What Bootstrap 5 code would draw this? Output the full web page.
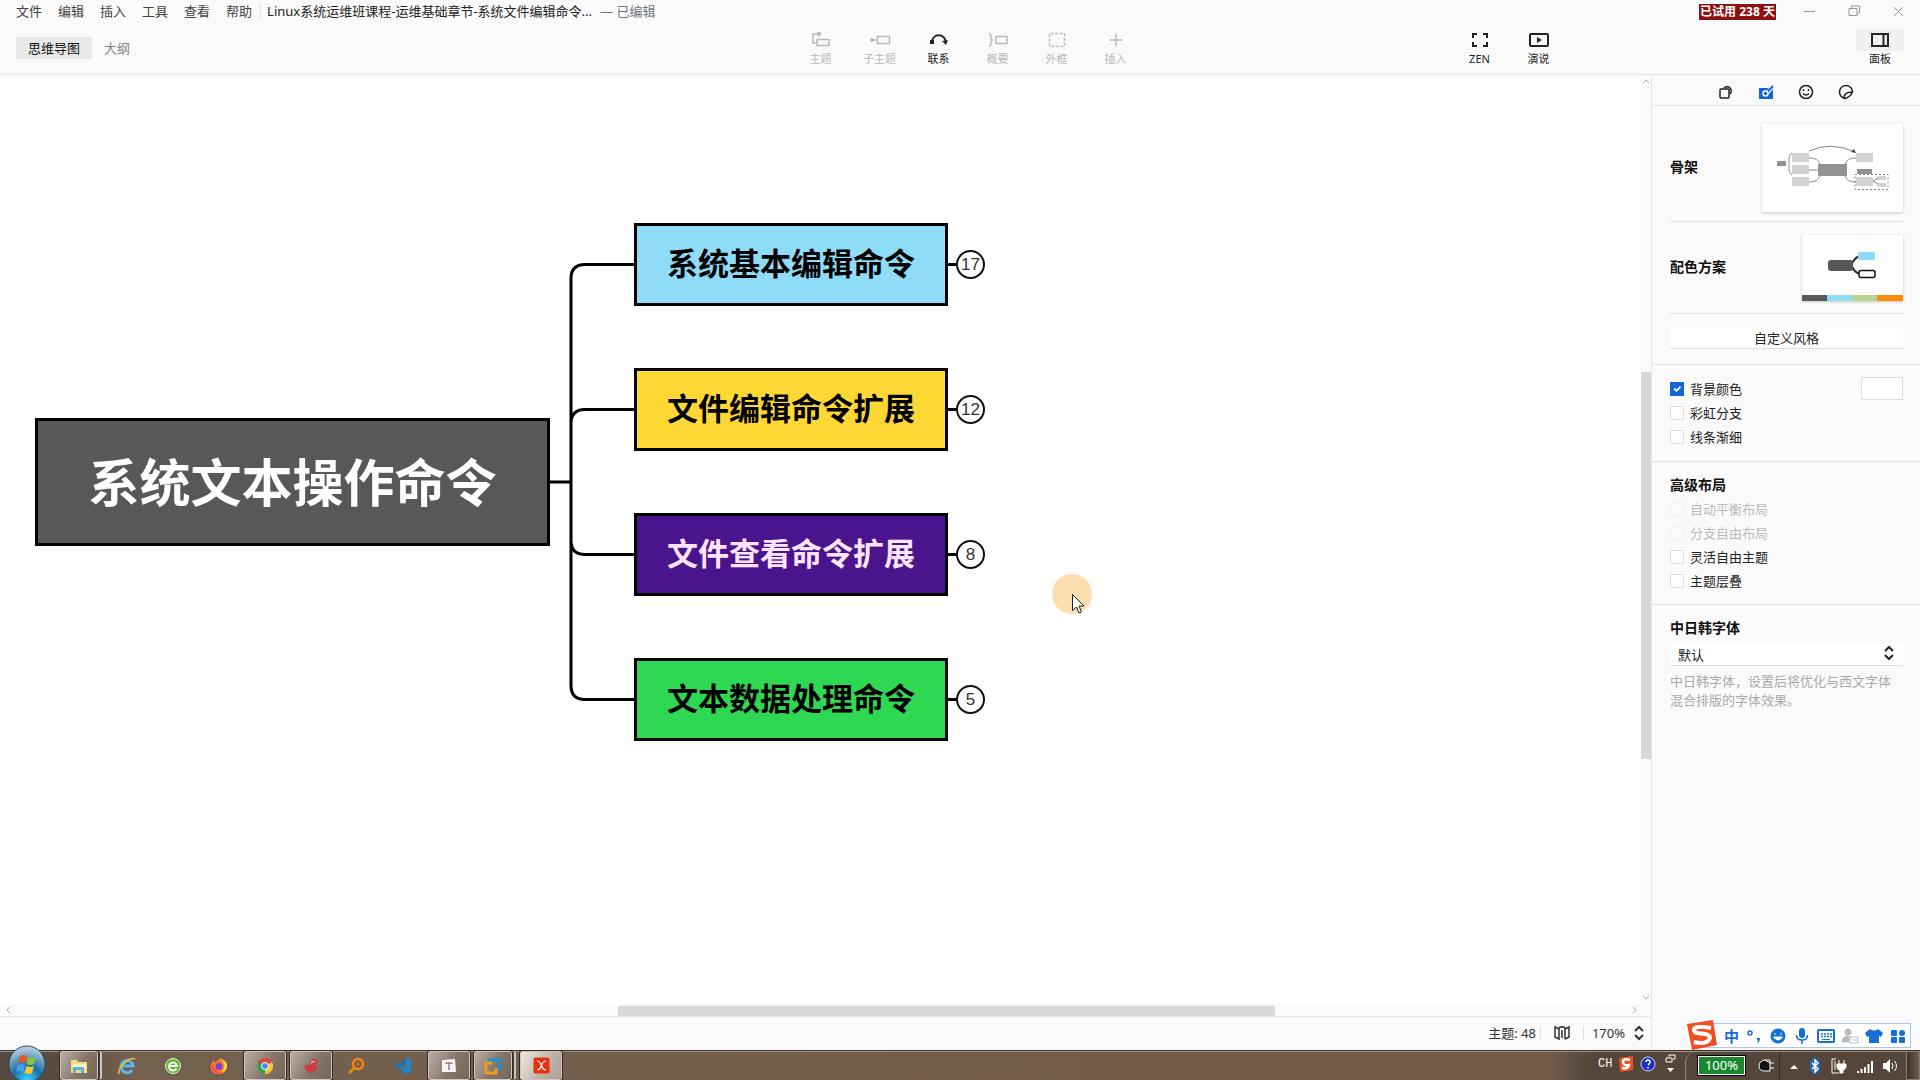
<!DOCTYPE html>
<html lang="zh-CN">
<head>
<meta charset="utf-8">
<meta name="viewport" content="width=device-width, initial-scale=1">
<title>Linux系统运维班课程</title>
<link href="https://cdn.jsdelivr.net/npm/bootstrap@5.3.0/dist/css/bootstrap.min.css" rel="stylesheet">
<style>
  :root { --ui: #fafafa; --line: #e6e6e6; --ink: #222; --blue: #1565d8; }
  body { font: 13px/18px "Noto Sans", "Noto Sans CJK SC", sans-serif; color: var(--ink); background: var(--ui); }
  button { font: inherit; color: inherit; border: 0; background: none; padding: 0; }
  svg { display: block; flex: none; }
  svg:not([fill]) { fill: none; }
  svg:not([stroke]) { stroke: currentColor; }
  a { color: inherit; text-decoration: none; }

  .app-head { height: 75px; border-bottom: 1px solid var(--line); }
  .title-row { height: 22px; padding: 0 14px 0 16px; }
  .menu-links { gap: 16px; color: #444; }
  .doc-title { border-left: 1px solid #e4e4e4; padding-left: 6px; margin-left: 8px; height: 16px; line-height: 16px; }
  .trial { background: #8f1010; color: #fff; font-weight: 700; font-size: 12px; line-height: 16px; width: 77px; margin: 2px 26px 0 0; }
  .win-btns { color: #999; gap: 28px; }
  .tool-row { padding: 1px 16px 0; height: 50px; }
  .tool-side { flex: 1 1 0; }
  .tab-strip { padding-top: 14px; }
  .view-tab { padding: 2px 12px; line-height: 18px; color: #888; }
  .view-tab.on { background: #e9e9e9; color: #111; }
  .tools { padding-left: 16px; }
  .tool { width: 59px; font-size: 11px; line-height: 14px; padding-bottom: 1px; color: #bbb; }
  .tool.live { color: var(--ink); }
  .tool-icon { width: 48px; height: 22px; margin-bottom: 1px; }
  .show-group { margin-right: 288px; }
  .tool.panel-btn { width: 48px; }
  .panel-btn .tool-icon { background: #efefef; }

  .board { background: #fff; border-top: 4px solid var(--ui); padding: 144px 0 0 35px; overflow: hidden; }
  .root-node { width: 515px; height: 128px; border: 3px solid #000; background: #585858; color: #fff; font-size: 51px; line-height: 60px; }
  .branches { gap: 62px; }
  .branch { width: 314px; height: 83px; border: 3px solid #000; color: #000; font-size: 31px; line-height: 40px; }
  .node-text { font-family: "Noto Sans CJK SC", sans-serif; font-weight: 700; padding-bottom: 5px; }
  .stub { width: 8px; height: 3px; background: #000; }
  .fold { width: 29px; height: 29px; border: 2px solid #111; border-radius: 50%; background: #fff; color: #333; font: 17px/25px "Liberation Sans", sans-serif; text-align: center; }
  .c-sky { background: #8edcf7; } .c-sun { background: #fdd835; }
  .c-violet { background: #4a148c; color: #fce4ff; } .c-green { background: #2fd853; }
  .pointer { left: 1052px; top: 574px; }

  .v-bar { width: 10px; color: #aaa; padding: 3px 0; background: var(--ui); }
  .v-thumb { width: 10px; height: 387px; background: #d8d8d8; margin-top: 52px; }
  .h-bar { height: 13px; color: #aaa; border-bottom: 1px solid var(--line); padding: 0 5px; }
  .h-thumb { height: 10px; width: 40%; background: #d8d8d8; margin-left: 37%; }
  .status { height: 33px; padding: 0 6px 2px 0; color: #333; }
  .status .sep { width: 1px; height: 12px; background: #ddd; }

  .side { width: 269px; border-left: 1px solid var(--line); }
  .side-tabs { height: 31px; gap: 20px; border-bottom: 1px solid var(--line); padding-top: 4px; }
  .blk { padding: 0 17px 0 18px; }
  .full { border-bottom: 1px solid #dedede; }
  .rule { border-bottom: 1px solid #dedede; }
  .h-lab { font-size: 14px; line-height: 20px; font-weight: 700; color: #111; margin-bottom: 2px; }
  .thumb { background: #fff; box-shadow: 0 1px 3px #0003; }
  .wide-btn { height: 21px; background: #fff; border-bottom: 1px solid #ddd; line-height: 20px; margin: 14px 0 15px; }
  .opt { height: 24px; gap: 6px; }
  .opt .form-check-input { width: 14px; height: 14px; margin: 0; border-radius: 0; border-color: #ddd; flex: none; }
  .opt .form-check-input:checked { background-color: var(--blue); border-color: var(--blue); }
  .opt .form-check-input:disabled, .opt .form-check-input:disabled ~ label { opacity: 1; color: #bbb; }
  .opt .form-check-input:disabled { border-color: #f2f2f2; background: none; }
  .swatch { width: 42px; height: 23px; padding: 0; border: 1px solid #ddd; background: #fff; }
  .cjk-select { display: block; appearance: none; width: 100%; height: 22px; border: 0; border-bottom: 1px solid #ddd; background: #fff; padding: 0 8px; font: inherit; color: inherit; }
  .hint { color: #aaa; line-height: 19px; margin: 6px 0 0; }

  .taskbar { height: 30px; background: linear-gradient(90deg, #564940 0, #5a4b41 60px, #74604f 130px, #705b4a 78%, #705b4a 1550px, #54463b 1590px); border-top: 1px solid #3a302a; box-shadow: inset 0 1px #a3968b; gap: 4px; }
  .orb { width: 56px; height: 30px; }
  .orb svg { position: absolute; left: 8px; top: -6px; }
  .slot { width: 42px; height: 29px; }
  .slot.open { border: 1px solid #cfc5bc; border-radius: 2px; outline: 1px solid #322a24; background: linear-gradient(120deg, #b9afa6, #85766a 55%, #75665a); }
  .slot.now { background: linear-gradient(120deg, #eee9e4, #bdb3aa 60%, #aaa096); }
  .slot.narrow { width: 38px; margin-right: 4px; box-shadow: 3px 0 0 -1px #4a3e35, 5px 0 0 -1px #cfc5bc; }
  .tray { color: #fff; height: 29px; }
  .lang { font: 12px/16px "Liberation Mono", monospace; width: 19px; }
  .batt-zone { height: 28px; padding: 0 4px 0 12px; gap: 12px; border-left: 1px solid #8d8074; border-top-left-radius: 10px; border-right: 1px solid #33291f; }
  .batt { width: 47px; height: 19px; background: #18882e; border: 1px solid #fff; outline: 1px solid #000; line-height: 17px; font-size: 13px; text-align: center; }
  .peek { width: 14px; height: 29px; border: 1px solid #8d8074; background: linear-gradient(90deg, #3a302a, #6b5d52); }

  .ime { right: 9px; bottom: 32px; width: 217px; height: 25px; background: #fff; border: 1px solid #a9c8ea; color: #1470d6; padding-left: 26px; }
  .ime > span, .ime > svg { width: 24px; text-align: center; font-size: 15px; }
  .ime > .ime-logo { left: -9px; top: -5px; width: 32px; }
</style>
<script src="https://cdn.jsdelivr.net/npm/bootstrap@5.3.0/dist/js/bootstrap.bundle.min.js"></script>
</head>
<body class="vh-100 d-flex flex-column overflow-hidden position-relative">

<header class="app-head flex-shrink-0">
  <div class="title-row d-flex align-items-center">
    <nav class="menu-links d-flex">
      <a href="#">文件</a><a href="#">编辑</a><a href="#">插入</a><a href="#">工具</a><a href="#">查看</a><a href="#">帮助</a>
    </nav>
    <div class="doc-title">Linux系统运维班课程-运维基础章节-系统文件编辑命令...</div>
    <span class="text-secondary ms-2">— 已编辑</span>
    <button class="trial ms-auto">已试用 238 天</button>
    <div class="win-btns d-flex align-items-center">
      <button aria-label="最小化"><svg width="16" height="14"><path d="M2 7.500h11"/></svg></button>
      <button aria-label="还原"><svg width="16" height="14"><path d="M3 4.500h8v7h-8zM5.500 4v-2h8v7h-2"/></svg></button>
      <button aria-label="关闭"><svg width="16" height="14"><path d="M4 3l9 9M13 3l-9 9"/></svg></button>
    </div>
  </div>
  <div class="tool-row d-flex">
    <div class="tool-side tab-strip d-flex align-items-start">
      <button class="view-tab on">思维导图</button><button class="view-tab">大纲</button>
    </div>
    <div class="tools d-flex">
      <button class="tool"><span class="tool-icon d-flex align-items-center justify-content-center mx-auto"><svg width="20" height="18" stroke-width="1.500"><path d="M7 3H2v9h4M6 8.500h12v6H6z"/><circle cx="8" cy="3" r="1.500" fill="currentColor"/></svg></span>主题</button>
      <button class="tool"><span class="tool-icon d-flex align-items-center justify-content-center mx-auto"><svg width="22" height="16" stroke-width="1.500"><path d="M3 8h5M8.500 4.500h12v7h-12z"/><circle cx="3" cy="8" r="2" fill="currentColor" stroke="none"/></svg></span>子主题</button>
      <button class="tool live"><span class="tool-icon d-flex align-items-center justify-content-center mx-auto"><svg width="20" height="16" stroke-width="2"><path d="M3 10C4 1 15 1 17 10"/><path d="M1 8h4v4H1zM13 9l6-1-2 5z" fill="currentColor" stroke="none"/></svg></span>联系</button>
      <button class="tool"><span class="tool-icon d-flex align-items-center justify-content-center mx-auto"><svg width="20" height="16" stroke-width="1.500"><path d="M1 2q2 0 2 3v1q0 2 2 2q-2 0-2 2v1q0 3-2 3M8 4.500h11v7H8z"/></svg></span>概要</button>
      <button class="tool"><span class="tool-icon d-flex align-items-center justify-content-center mx-auto"><svg width="18" height="16" stroke-width="1.500"><rect x="1.500" y="1.500" width="15" height="13" rx="1" stroke-dasharray="3 1.500"/></svg></span>外框</button>
      <button class="tool"><span class="tool-icon d-flex align-items-center justify-content-center mx-auto"><svg width="16" height="16" stroke-width="1.500"><path d="M8 1.500v13M1.500 8h13"/></svg></span>插入</button>
    </div>
    <div class="tool-side d-flex justify-content-end">
      <div class="show-group d-flex">
        <button class="tool live"><span class="tool-icon d-flex align-items-center justify-content-center mx-auto"><svg width="18" height="16" stroke-width="2"><path d="M2 6V2h4M12 2h4v4M16 10v4h-4M6 14H2v-4"/></svg></span>ZEN</button>
        <button class="tool live"><span class="tool-icon d-flex align-items-center justify-content-center mx-auto"><svg width="22" height="16" stroke-width="2"><rect x="2" y="2" width="18" height="12" rx="1"/><path d="M9 5l5 3-5 3z" fill="currentColor" stroke="none"/></svg></span>演说</button>
      </div>
      <button class="tool live panel-btn"><span class="tool-icon d-flex align-items-center justify-content-center mx-auto"><svg width="20" height="16" stroke-width="2"><rect x="2" y="2" width="16" height="12"/><path d="M13.500 2v12"/></svg></span>面板</button>
    </div>
  </div>
</header>

<div class="d-flex flex-fill" style="min-height:0">
  <main class="d-flex flex-column flex-fill" style="min-width:0">
    <div class="d-flex flex-fill" style="min-height:0">
      <div class="board flex-fill">
        <div class="d-flex align-items-center">
          <div class="root-node node-text d-flex align-items-center justify-content-center flex-shrink-0">系统文本操作命令</div>
          <svg width="84" height="518" stroke="#000" stroke-width="3"><path d="M0 259H21M84 41.500H35q-14 0-14 14V462.500q0 14 14 14H84M21 200.500q0-14 14-14H84M21 317.500q0 14 14 14H84"/></svg>
          <div class="branches d-flex flex-column">
            <div class="d-flex align-items-center"><div class="branch node-text c-sky d-flex align-items-center justify-content-center">系统基本编辑命令</div><i class="stub"></i><button class="fold">17</button></div>
            <div class="d-flex align-items-center"><div class="branch node-text c-sun d-flex align-items-center justify-content-center">文件编辑命令扩展</div><i class="stub"></i><button class="fold">12</button></div>
            <div class="d-flex align-items-center"><div class="branch node-text c-violet d-flex align-items-center justify-content-center">文件查看命令扩展</div><i class="stub"></i><button class="fold">8</button></div>
            <div class="d-flex align-items-center"><div class="branch node-text c-green d-flex align-items-center justify-content-center">文本数据处理命令</div><i class="stub"></i><button class="fold">5</button></div>
          </div>
        </div>
      </div>
      <div class="v-bar d-flex flex-column justify-content-between align-items-center">
        <svg width="8" height="6"><path d="M1 5l3-3 3 3"/></svg>
        <div class="v-thumb"></div>
        <svg width="8" height="6"><path d="M1 1l3 3 3-3"/></svg>
      </div>
    </div>
    <div class="h-bar d-flex align-items-center">
      <svg width="6" height="8"><path d="M5 1L2 4l3 3"/></svg>
      <div class="h-thumb align-self-end me-auto"></div>
      <svg width="6" height="8" class="me-2"><path d="M1 1l3 3-3 3"/></svg>
    </div>
    <div class="status d-flex align-items-center justify-content-end">
      <span>主题: 48</span><i class="sep ms-1 me-2"></i>
      <svg width="18" height="16" stroke-width="1.500" class="mx-1"><path d="M2 2l4 2v10l-4-2zM6 14V4c0-3 6-3 6 0v10M12 4l4-2v10l-4 2M9 5v8"/></svg>
      <i class="sep mx-2"></i><span class="me-2">170%</span>
      <svg width="12" height="16" stroke-width="2"><path d="M2 6l4-4 4 4M2 10l4 4 4-4"/></svg>
    </div>
  </main>

  <aside class="side flex-shrink-0">
    <div class="side-tabs d-flex align-items-center justify-content-center">
      <button aria-label="样式"><svg width="20" height="16" stroke-width="1.500"><rect x="4" y="5" width="9" height="9" rx="1"/><path d="M8 4a4 4 0 1 1 6 6"/></svg></button>
      <button aria-label="风格"><svg width="20" height="16" stroke="none"><path d="M3 4h14v11H3z" fill="#1565d8"/><path d="M11 9l6.500-7" stroke="#fafafa" stroke-width="4"/><path d="M11 8.500l6-6.500" stroke="#1565d8" stroke-width="2"/><circle cx="9.500" cy="9.500" r="2.500" fill="#1565d8" stroke="#fff" stroke-width="1.500"/></svg></button>
      <button aria-label="图标"><svg width="20" height="16" stroke-width="1.500"><circle cx="10" cy="8" r="6.500"/><path d="M7 9.500q3 3 6 0M7.500 5v2M12.500 5v2"/></svg></button>
      <button aria-label="贴纸"><svg width="20" height="16" stroke-width="1.500"><path d="M16.500 8A6.500 6.500 0 1 0 9 14.400q5-1 7.500-6.400zM8 14c0-4 2-6 8-6"/></svg></button>
    </div>

    <section class="blk">
      <div class="d-flex align-items-center justify-content-between rule pb-2 pt-3" style="height:116px">
        <span class="h-lab">骨架</span>
        <button class="thumb" aria-label="骨架"><svg width="141" height="88" stroke="#888"><g fill="#d2d2d2" stroke="none"><path d="M30 29h17v9H30zM30 41h17v9H30zM30 53h17v9H30zM94 29h17v9H94zM94 53h17v9H94zM115 52h9v4h-9zM115 59h9v4h-9z"/><path d="M15 37h9v5h-9zM56 40h29v12H56zM95 45h15v5H95z" fill="#929292"/></g><path d="M30 29c-3 2-3 4-3 11s0 9 3 11M47 34c7 0 9 2 11 6M47 46h9M47 58c7 0 9-2 11-6M94 34c-7 0-9 2-11 6M94 58c-7 0-9-2-11-6M111 57l5-3M111 57l5 3M47 27q22-10 46 1"/><path d="M94 29l-5-1 3-3z" fill="#444" stroke="none"/><path d="M93 50.500h33v15H93z" stroke-dasharray="2 2"/></svg></button>
      </div>
      <div class="d-flex align-items-center justify-content-between rule" style="height:92px">
        <span class="h-lab">配色方案</span>
        <button class="thumb" aria-label="配色方案"><svg width="101" height="66" stroke="none"><path d="M49 30c3-5 4-8 10-9M49 30c3 5 4 8 10 9" stroke="#222" stroke-width="2"/><rect x="26" y="25" width="25" height="11" rx="3" fill="#585858"/><rect x="56" y="17" width="17" height="8" rx="2" fill="#8edcf7"/><rect x="57" y="35.500" width="16" height="7" rx="2" fill="#fff" stroke="#111" stroke-width="1.500"/><path d="M0 60h25v6H0z" fill="#585858"/><path d="M25 60h25v6H25z" fill="#8edcf7"/><path d="M50 60h25v6H50z" fill="#b9d391"/><path d="M75 60h26v6H75z" fill="#fb8c0a"/></svg></button>
      </div>
      <button class="wide-btn w-100 d-block">自定义风格</button>
    </section>
    <section class="blk full d-flex justify-content-between border-top pt-2 pb-2" style="height:98px">
      <div class="pt-1">
        <div class="opt d-flex align-items-center"><input class="form-check-input" type="checkbox" id="o1" checked><label for="o1">背景颜色</label></div>
        <div class="opt d-flex align-items-center"><input class="form-check-input" type="checkbox" id="o2"><label for="o2">彩虹分支</label></div>
        <div class="opt d-flex align-items-center"><input class="form-check-input" type="checkbox" id="o3"><label for="o3">线条渐细</label></div>
      </div>
      <button class="swatch mt-1" aria-label="背景颜色"></button>
    </section>
    <section class="blk full" style="height:143px;padding-top:13px">
      <div class="h-lab">高级布局</div>
      <div class="opt d-flex align-items-center"><input class="form-check-input" type="checkbox" id="a1" disabled><label for="a1">自动平衡布局</label></div>
      <div class="opt d-flex align-items-center"><input class="form-check-input" type="checkbox" id="a2" disabled><label for="a2">分支自由布局</label></div>
      <div class="opt d-flex align-items-center"><input class="form-check-input" type="checkbox" id="a3"><label for="a3">灵活自由主题</label></div>
      <div class="opt d-flex align-items-center"><input class="form-check-input" type="checkbox" id="a4"><label for="a4">主题层叠</label></div>
    </section>
    <section class="blk" style="padding-top:13px">
      <label class="h-lab d-block" for="cjk">中日韩字体</label>
      <div class="position-relative pt-1">
        <select class="cjk-select" id="cjk"><option>默认</option></select>
        <svg class="position-absolute end-0 top-50 translate-middle-y me-2" width="12" height="16" stroke-width="2"><path d="M2 6l4-4 4 4M2 10l4 4 4-4"/></svg>
      </div>
      <p class="hint">中日韩字体，设置后将优化与西文字体混合排版的字体效果。</p>
    </section>
  </aside>
</div>

<footer class="taskbar d-flex flex-shrink-0 position-relative">
  <button class="orb position-relative" aria-label="开始"><svg width="38" height="38" stroke="none"><defs><radialGradient id="g" cx=".5" cy=".95" r=".9"><stop offset="0" stop-color="#3fd8ff"/><stop offset=".45" stop-color="#1a6fa8"/><stop offset="1" stop-color="#b8cede"/></radialGradient></defs><circle cx="19" cy="19" r="18" fill="url(#g)" stroke="#2c4a63"/><path d="M12 11q4-2 7 0l-1.500 7q-4-2-7.500 0z" fill="#e8562a"/><path d="M20 12q4 2 8 0l-2 7q-4 2-7.500 0z" fill="#8cc63f"/><path d="M9.500 20q4-2 7.500 0l-1.500 7q-4-2-7.500 0z" fill="#3fa0e6"/><path d="M18.500 21q4 2 7.500 0l-2 7q-4 2-7.500 0z" fill="#fcc92e"/></svg></button>
  <button class="slot open narrow d-flex align-items-center justify-content-center" aria-label="资源管理器"><svg width="18" height="16" stroke="none"><path d="M1 2h6l1 2h9v11H1z" fill="#f3dd83"/><path d="M3 6h13v5H3z" fill="#fff2b8"/><path d="M3 15V9h11v6h-3v-3H6v3z" fill="#5ab4e0"/></svg></button>
  <button class="slot d-flex align-items-center justify-content-center" aria-label="IE"><svg width="20" height="20"><path d="M15 14a6 6 0 1 1 1-4H6" stroke="#5bb5ef" stroke-width="3"/><path d="M2 18C0 13 12 0 18 3" stroke="#f0c33c" stroke-width="1.500"/></svg></button>
  <button class="slot d-flex align-items-center justify-content-center" aria-label="360"><svg width="18" height="18"><circle cx="9" cy="9" r="7.500" fill="#5cb531" stroke="#e4f5d8"/><path d="M12.500 11.500A4 4 0 1 1 13 9H6" stroke="#fff" stroke-width="2"/></svg></button>
  <button class="slot d-flex align-items-center justify-content-center" aria-label="Firefox"><svg width="18" height="18" stroke="none"><path d="M1 7l3-4 1 3 5-5q3 3 3 5l3-1q3 12-7 12T1 7z" fill="#ff7a22"/><path d="M2 11q3 6 9 5-7-1-9-9z" fill="#f02f6a"/><circle cx="9" cy="9.500" r="3.500" fill="#7542d8"/><path d="M10 1q4 4 4 8 0 4-3 6 7-1 6-8l-2-3z" fill="#ffd23c"/></svg></button>
  <button class="slot open d-flex align-items-center justify-content-center" aria-label="Chrome"><svg width="16" height="16" stroke="none"><path d="M8 8L1 4.500A8 8 0 0 1 15 4z" fill="#e0443a"/><path d="M8 8l7-4A8 8 0 0 1 8 16z" fill="#fbc62c"/><path d="M8 8v8A8 8 0 0 1 1 4.500z" fill="#2ea152"/><circle cx="8" cy="8" r="3.500" fill="#4a8cf0" stroke="#fff"/></svg></button>
  <button class="slot open d-flex align-items-center justify-content-center" aria-label="录屏"><svg width="16" height="16" stroke="none"><path d="M1 8q3-3 5 0l2-6q4-3 7 1-1 3-3 4 3 2 1 5-4 4-8 2-3-2-4-6z" fill="#c93b40"/><path d="M8 3q4-1 5 1-4 0-5 3z" fill="#f09a9a"/></svg></button>
  <button class="slot d-flex align-items-center justify-content-center" aria-label="搜索"><svg width="18" height="18" stroke="#f4870b" stroke-width="2.500"><circle cx="10" cy="7" r="5"/><circle cx="10" cy="7" r="1" stroke-width="1"/><path d="M6 11l-5 5"/></svg></button>
  <button class="slot d-flex align-items-center justify-content-center" aria-label="VS Code"><svg width="18" height="18" stroke="none"><path d="M12 1l5 2v12l-5 2L1 7l2-1 9 6z" fill="#1b86d4"/><path d="M12 1v4L3 12l-2-1z" fill="#1672b8"/></svg></button>
  <button class="slot open d-flex align-items-center justify-content-center" aria-label="Typora"><svg width="16" height="16" stroke="none"><path d="M1 2l13-1 1 13H1z" fill="#f8f6f4"/><path d="M5 6V5h6v1M8 5v6M7 11h2" stroke="#555"/></svg></button>
  <button class="slot open narrow d-flex align-items-center justify-content-center" aria-label="VMware"><svg width="18" height="18" stroke-width="3"><path d="M5 7V3h11v9h-4" stroke="#2290c8"/><path d="M8 6H2v10h10v-5" stroke="#ef9a1c"/></svg></button>
  <button class="slot open now d-flex align-items-center justify-content-center" aria-label="XMind"><svg width="17" height="17"><rect x=".5" y=".5" width="16" height="16" rx="2" fill="#e8300f" stroke="none"/><path d="M4 4q3 0 4.500 4.500T13 13M13 4Q10 4 8.500 8.500T4 13" stroke="#fff" stroke-width="1.200"/></svg></button>

  <div class="tray d-flex align-items-center ms-auto">
    <span class="lang mb-1">CH</span>
    <svg width="18" height="18" class="me-1 mb-1"><path d="M2 3l14-2v14L3 17z" fill="#f04e23" stroke="none"/><path d="M13 5Q6 3 6 7t6 3q0 4-7 3" stroke="#fff" stroke-width="2.500"/></svg>
    <svg width="18" height="18" class="me-2 mb-1"><circle cx="9" cy="9" r="7" fill="#1f2fbd" stroke="#cfd6ff"/><path d="M7 7q0-2 2-2t2 2-2 3M9 12v1.500" stroke="#fff" stroke-width="1.500"/></svg>
    <svg width="12" height="22" class="me-2 mb-1"><path d="M1 5h6v4H1zM4 4V2h6v4H8"/><path d="M2 15h7l-3.500 4z" fill="#fff" stroke="none"/></svg>
    <div class="batt-zone d-flex align-items-center">
      <span class="batt">100%</span>
      <svg width="18" height="14"><path d="M8 1h5v3h4M13 9h4M13 4v8H8Q2 12 2 7t6-6z" fill="#111"/></svg>
    </div>
    <svg width="12" height="8" class="mx-2"><path d="M2 7l4-4 4 4z" fill="#fff" stroke="none"/></svg>
    <svg width="14" height="18" class="me-2"><rect x="2" y="1" width="10" height="16" rx="5" fill="#2165b3" stroke="none"/><path d="M4 6l6 6-3 3V3l3 3-6 6" stroke-width="1.500"/></svg>
    <svg width="18" height="18" class="me-2"><path d="M6 2H2v14h7M5 4v9"/><path d="M9 3v4M14 3v4M7 7h9v3q-1 3-3 3v3h-3v-3q-3 0-3-3z" fill="#fff"/></svg>
    <svg width="18" height="16" class="me-2" stroke-width="2"><path d="M2 15v-2M5.500 15v-4M9 15V9M12.500 15V6M16 15V3"/></svg>
    <svg width="16" height="16" class="me-2"><path d="M1 5h3l4-4v14l-4-4H1z" fill="#fff" stroke="none"/><path d="M10 5q2 3 0 6M12.500 3q4 5 0 10"/></svg>
    <button class="peek" aria-label="显示桌面"></button>
  </div>
</footer>

<div class="ime position-absolute d-flex align-items-center">
  <svg class="ime-logo position-absolute" width="32" height="32"><path d="M1 5l26-4 4 25-25 5z" fill="#f04e23" stroke="none"/><path d="M25 9Q8 6 8 11c0 6 16 1 16 8q-2 7-16 4" stroke="#fff" stroke-width="4"/></svg>
  <span><b>中</b></span>
  <svg height="18"><circle cx="8" cy="6" r="2" stroke-width="1.500"/><path d="M15 11h3q0 4-3 5l1-3h-1z" fill="currentColor" stroke="none"/></svg>
  <svg height="18"><circle cx="12" cy="9" r="7.500" fill="currentColor" stroke="none"/><path d="M7.500 10q4.500 6 9 0zM9 6v2M15 6v2" fill="#fff" stroke="#fff"/></svg>
  <svg height="18"><rect x="9" y="1" width="6" height="10" rx="3" fill="currentColor" stroke="none"/><path d="M6.500 8q0 5 5.500 5t5.500-5M12 13v4" stroke-width="1.500"/></svg>
  <svg height="18"><rect x="4" y="3" width="16" height="12" rx="1" stroke-width="2"/><path d="M7 7h11M7 9.500h11" stroke-width="1.500" stroke-dasharray="2 1"/><path d="M8 12.500h8"/></svg>
  <svg height="18" style="color:#bbb"><circle cx="10" cy="5" r="3.500" fill="currentColor" stroke="none"/><path d="M4 15q0-6 7-6v6z" fill="currentColor"/><path d="M12 10h8v6h-8zM14 13h5" fill="#fff"/></svg>
  <svg height="18"><path d="M8 2q4 3 8 0l5 4-2 4-2-1v7H7V9l-2 1-2-4z" fill="currentColor" stroke="none"/></svg>
  <svg height="18" stroke="none"><g fill="currentColor"><rect x="5" y="3" width="6" height="6" rx="1"/><rect x="5" y="10" width="6" height="6" rx="1"/><rect x="13" y="10" width="6" height="6" rx="1"/><circle cx="16" cy="6" r="3"/></g></svg>
</div>

<svg class="pointer position-absolute" width="40" height="42" stroke="none"><circle cx="20" cy="20" r="20" fill="#fbdfae"/><path d="M20.500 20.500v16l4-3.500 2.500 6 2.500-1-2.500-6h5z" fill="#fff" stroke="#222"/></svg>
</body>
</html>
